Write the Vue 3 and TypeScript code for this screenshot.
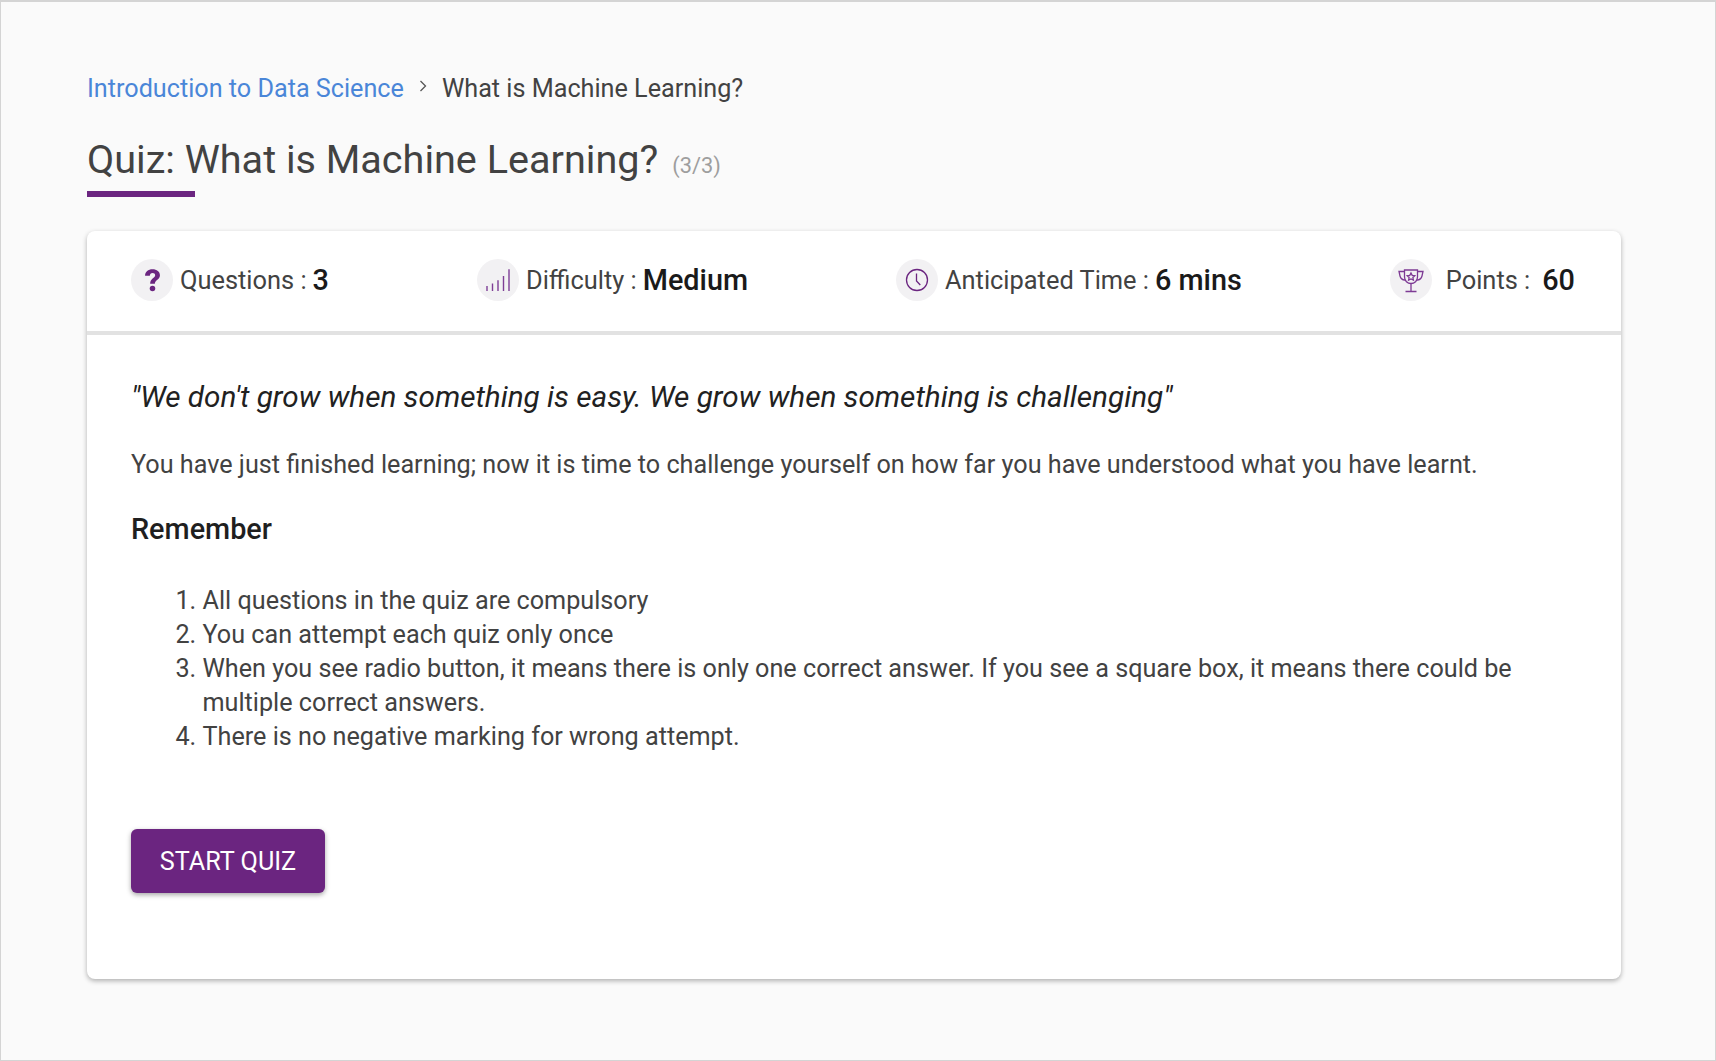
<script setup lang="ts">
const rules: string[] = [
  'All questions in the quiz are compulsory',
  'You can attempt each quiz only once',
  'When you see radio button, it means there is only one correct answer. If you see a square box, it means there could be multiple correct answers.',
  'There is no negative marking for wrong attempt.'
]
</script>

<template>
  <div class="page">
    <nav class="crumbs">
      <a class="link">Introduction to Data Science</a>
      <svg class="chev" width="12" height="14" viewBox="0 0 12 14"><path d="M3.500 2l5 5-5 5" fill="none" stroke="#555" stroke-width="1.300" /></svg>
      <span>What is Machine Learning?</span>
    </nav>
    <div class="title-row">
      <h1>Quiz: What is Machine Learning?</h1>
      <span class="count">(3/3)</span>
    </div>
    <div class="underline"></div>
    <section class="card">
      <header class="stats">
        <div class="stat">
          <span class="ico">
            <svg width="17" height="24" viewBox="0 0 16 22"><path d="M1 7C1 3 4 .8 8 .8s7 2.200 7 5.700c0 4.200-4.800 4.400-4.800 8H5.800c0-5 4.700-5.200 4.700-8 0-1.400-1-2.200-2.500-2.200S5.500 5.300 5.500 7z" fill="#6b2580"/><circle cx="8" cy="19" r="2.600" fill="#6b2580"/></svg>
          </span>
          <span class="lbl">Questions :</span><b class="val">3</b>
        </div>
        <div class="stat">
          <span class="ico">
            <svg width="26" height="24" viewBox="0 0 26 24" stroke="#7f3f96" stroke-width="1.400" fill="none"><path d="M2 23v-5M7.500 23v-7.400M13 23V12.300M18.500 23V8M24 23V1.300"/></svg>
          </span>
          <span class="lbl">Difficulty :</span><b class="val">Medium</b>
        </div>
        <div class="stat">
          <span class="ico">
            <svg width="24" height="24" viewBox="0 0 24 24" fill="none" stroke="#6b2580" stroke-width="1.300"><circle cx="12" cy="12" r="10.500"/><path d="M11.500 5.500V13l3.800 4"/></svg>
          </span>
          <span class="lbl">Anticipated Time :</span><b class="val">6 mins</b>
        </div>
        <div class="stat">
          <span class="ico">
            <svg width="28" height="25" viewBox="0 0 28 25" fill="none" stroke="#7d3a94" stroke-width="1.300"><path d="M7.500 2h13v7c0 4-3 6.500-6.500 6.500S7.500 13 7.500 9z"/><path d="M7.500 3.500H2l1 4.500c.6 2.500 2.500 3.800 5 4.200M20.500 3.500H26l-1 4.500c-.6 2.500-2.500 3.800-5 4.200M14 15.500V23M8.500 23.500h11"/><path d="M14 5l1.200 2.400 2.600.4-1.900 1.800.5 2.600-2.400-1.200-2.400 1.200.5-2.600-1.900-1.800 2.600-.4z"/></svg>
          </span>
          <span class="lbl pts-lbl">Points :</span><b class="val pts-val">60</b>
        </div>
      </header>
      <div class="body">
        <p class="quote">"We don't grow when something is easy. We grow when something is challenging"</p>
        <p class="intro">You have just finished learning; now it is time to challenge yourself on how far you have understood what you have learnt.</p>
        <h2>Remember</h2>
        <ol>
          <li v-for="r in rules" :key="r">{{ r }}</li>
        </ol>
        <button class="start">START QUIZ</button>
      </div>
    </section>
  </div>
</template>

<style>
html, body { margin: 0; background: #fafafa; }
</style>

<style scoped>
.page {
  box-sizing: border-box;
  height: 1061px;
  background: #fafafa;
  border: 1px solid #d4d4d4;
  border-top-width: 2px;
  padding: 70px 94px 0 86px;
  font-family: Roboto, sans-serif;
  color: #424242;
}
.crumbs { display: flex; align-items: center; font-size: 25.200px; line-height: 34px; }
.link { color: #4a86d8; }
.chev { margin: -6px 13px 0 13px; }
.title-row { display: flex; align-items: baseline; margin-top: 30px; }
h1 { margin: 0; font-size: 39.600px; line-height: 48px; font-weight: 400; color: #424242; }
.count { margin-left: 14px; font-size: 21.800px; color: #9e9e9e; }
.underline { width: 108px; height: 6px; background: #6b2580; margin-top: 7px; }
.card {
  margin-top: 34px;
  background: #fff;
  border-radius: 8px;
  box-shadow: 0 2px 5px rgba(0,0,0,.3);
  height: 748px;
}
.stats {
  display: flex;
  justify-content: space-between;
  align-items: center;
  padding: 0 46px 2px 44px;
  height: 98px;
  border-bottom: 4px solid #e2e2e2;
}
.stat { display: flex; align-items: center; }
.ico {
  width: 42px; height: 42px; border-radius: 50%;
  background: #f2f1f3;
  display: flex; align-items: center; justify-content: center;
  margin-right: 7px;
}
.lbl { font-size: 25.400px; color: #424242; }
.val { margin-left: 6px; font-size: 28.800px; font-weight: 500; color: #1a1a1a; }
.pts-lbl { margin-left: 7px; }
.pts-val { margin-left: 12px; }
.body { padding: 0 44px; }
.quote { margin: 44px 0 0; font-size: 29.700px; line-height: 36px; font-style: italic; color: #212121; }
.intro { margin: 33px 0 0; font-size: 25.200px; line-height: 34px; }
h2 { margin: 29px 0 0; font-size: 28.800px; line-height: 36px; font-weight: 500; color: #1f1f1f; }
ol { margin: 37px 0 0; padding-left: 71.500px; font-size: 25.200px; line-height: 34px; }
.start {
  display: block;
  margin-top: 75px;
  width: 194px; height: 64px;
  background: #6b2580; color: #fff;
  border: none; border-radius: 6px;
  font: 400 25.200px Roboto, sans-serif;
  box-shadow: 0 2px 5px rgba(0,0,0,.35);
}
</style>
